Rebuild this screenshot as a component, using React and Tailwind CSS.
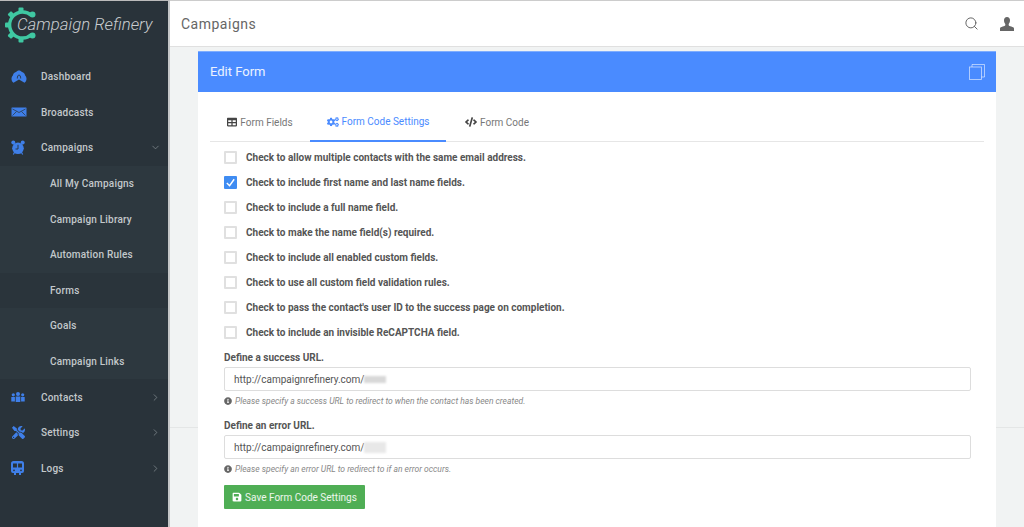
import React from 'react';
import { ChevronDown, ChevronRight, Search } from 'lucide-react';
import { FaCode, FaCogs, FaInfoCircle, FaSave, FaTable, FaTools } from 'react-icons/fa';

const BLUE = '#3f7fe8';
const DARK = '#29333a';

function DashIcon() {
  return (
    <svg viewBox="0 0 16 14" className="w-4 h-[14px]">
      <path fill={BLUE} d="M8 0.500c1.300 0 2.200.6 3 1.500 1.700.4 2.800 1.600 3 3.200.8.9 1.500 2.100 1.500 3.500 0 1.700-.8 3.400-2 4L8 9.500 2.500 12.700c-1.200-.6-2-2.300-2-4 0-1.400.7-2.600 1.500-3.500.2-1.600 1.300-2.800 3-3.200C5.800 1.100 6.700.5 8 .5z" />
      <path fill="none" stroke={DARK} strokeWidth="0.900" d="M6.300 8.500C6.300 6.500 7 5 8 5s1.700 1.500 1.700 3.500" />
    </svg>
  );
}

function MailIcon() {
  return (
    <svg viewBox="0 0 16 10" className="w-4 h-[10px]">
      <rect x="0.500" y="0.500" width="15" height="9" rx="0.500" fill={BLUE} />
      <path fill="none" stroke={DARK} strokeWidth="0.700" d="M1.500 2L8 5.500L14.500 2M1.500 8.500L5.500 4.500M14.500 8.500L10.500 4.500" />
    </svg>
  );
}

function AlarmIcon() {
  return (
    <svg viewBox="0 0 14 15" className="w-[14px] h-[15px]">
      <circle cx="7" cy="8.300" r="5.800" fill={BLUE} />
      <circle cx="2.300" cy="2.400" r="2" fill={BLUE} />
      <circle cx="11.700" cy="2.400" r="2" fill={BLUE} />
      <path stroke={BLUE} strokeWidth="1.200" d="M3.500 12.500L2.300 14.500M10.500 12.500L11.700 14.500" />
      <path fill="none" stroke={DARK} strokeWidth="0.900" d="M7 4.800V9H4.500" />
    </svg>
  );
}

function UsersIcon() {
  return (
    <svg viewBox="0 0 14 10" className="w-[14px] h-[10px]">
      <g fill={BLUE}>
        <circle cx="2.300" cy="2.800" r="1.600" />
        <circle cx="11.700" cy="2.800" r="1.600" />
        <path d="M0.300 5h3.600v4.500H0.300zM10.100 5h3.600v4.500h-3.600z" />
        <circle cx="7" cy="2" r="2" />
        <path d="M4.700 4.500h4.600v5.500H4.700z" />
      </g>
    </svg>
  );
}

function TrainIcon() {
  return (
    <svg viewBox="0 0 13 14" className="w-[13px] h-[14px]">
      <path fill={BLUE} d="M2.500 0h8A2.500 2.500 0 0 1 13 2.500V10a2 2 0 0 1-2 2H2a2 2 0 0 1-2-2V2.500A2.500 2.500 0 0 1 2.500 0zM3 12h2v2H3zM8 12h2v2H8z" />
      <path fill={DARK} d="M2 2.500h3.900v4H2zM7.100 2.500H11v4H7.100z" />
      <circle cx="3" cy="9.300" r="0.900" fill={DARK} />
      <circle cx="10" cy="9.300" r="0.900" fill={DARK} />
    </svg>
  );
}

const mainItems = [
  { label: 'Dashboard', icon: <DashIcon /> },
  { label: 'Broadcasts', icon: <MailIcon /> },
];

const subItems = ['All My Campaigns', 'Campaign Library', 'Automation Rules', 'Forms', 'Goals', 'Campaign Links'];

const lowerItems = [
  { label: 'Contacts', icon: <UsersIcon /> },
  { label: 'Settings', icon: <FaTools className="w-[15px] h-[13px] text-[#3f7fe8]" /> },
  { label: 'Logs', icon: <TrainIcon /> },
];

const checks = [
  ['Check to allow multiple contacts with the same email address.', false],
  ['Check to include first name and last name fields.', true],
  ['Check to include a full name field.', false],
  ['Check to make the name field(s) required.', false],
  ['Check to include all enabled custom fields.', false],
  ['Check to use all custom field validation rules.', false],
  ["Check to pass the contact's user ID to the success page on completion.", false],
  ['Check to include an invisible ReCAPTCHA field.', false],
];

function NavRow({ icon, label, chevron }) {
  return (
    <div className="h-[35.6px] flex items-center pl-[11px] pr-[7px] text-[10px] font-medium tracking-[0.2px] text-[#c3c8cb]">
      <span className="w-[30px] flex justify-start">{icon}</span>
      <span className="flex-1">{label}</span>
      {chevron}
    </div>
  );
}

function UrlField({ label, help, blurClass }) {
  return (
    <div>
      <div className="h-[14px] pt-[1px] text-[10px] leading-[14px] font-bold text-[#555]">{label}</div>
      <div className="mt-[3px] h-[24px] w-[747px] rounded-[2px] border border-[#ddd] bg-white flex items-center pl-[9px] text-[10px] text-[#555]">
        http://campaignrefinery.com/
        <span className={blurClass} />
      </div>
      <div className="mt-[4px] flex items-center gap-[3px] text-[8.5px] leading-[12px] italic text-[#888]">
        <FaInfoCircle className="w-[8px] h-[8px] text-[#666]" />
        {help}
      </div>
    </div>
  );
}

export default function App() {
  return (
    <div className="h-[527px] w-[1024px] flex overflow-hidden bg-[#f1f3f3] font-['Roboto',sans-serif]">
      {/* Sidebar */}
      <aside className="w-[170px] shrink-0 bg-[#29333a] border-t border-[#bbb] border-r-2 border-r-[#c4c6c7]">
        <div className="h-[58px] flex items-center pl-[4px] pb-[11px]">
          <svg viewBox="0 0 34 36" className="w-[34px] h-[36px] shrink-0">
            <g fill="#3fc8a2">
              <path fill="none" stroke="#3fc8a2" strokeWidth="3.400" d="M27.500 8.500A13 13 0 1 0 27.500 27.500" />
              <rect x="14.500" y="0.500" width="5" height="5" rx="1" />
              <rect x="14.500" y="30.500" width="5" height="5" rx="1" />
              <rect x="1" y="15.500" width="5" height="5" rx="1" />
              <rect x="4.500" y="5" width="5" height="5" rx="1" transform="rotate(45 7 7.500)" />
              <rect x="4.500" y="26" width="5" height="5" rx="1" transform="rotate(45 7 28.500)" />
              <circle cx="28.500" cy="7.500" r="3" />
              <circle cx="28.500" cy="28.500" r="3" />
            </g>
          </svg>
          <span className="-ml-[21px] text-[16.8px] italic font-light text-[#c9cdd0] whitespace-nowrap">
            Campaign Refinery
          </span>
        </div>
        {mainItems.map((item) => (
          <NavRow key={item.label} icon={item.icon} label={item.label} />
        ))}
        <NavRow
          icon={<AlarmIcon />}
          label="Campaigns"
          chevron={<ChevronDown className="w-[11px] h-[11px] text-[#8b9397]" strokeWidth={1.500} />}
        />
        <div className="bg-[#2d383f]">
          {subItems.map((label) => (
            <div
              key={label}
              className={`h-[35.6px] flex items-center pl-[50px] text-[10px] font-medium tracking-[0.2px] text-[#c3c8cb] ${label === 'Forms' ? 'bg-[#2a343b]' : ''}`}
            >
              {label}
            </div>
          ))}
        </div>
        {lowerItems.map((item) => (
          <NavRow
            key={item.label}
            icon={item.icon}
            label={item.label}
            chevron={<ChevronRight className="w-[11px] h-[11px] text-[#8b9397]" strokeWidth={1.500} />}
          />
        ))}
      </aside>

      {/* Main column */}
      <main className="flex-1 flex flex-col min-w-0">
        <header className="h-[47px] shrink-0 bg-white border-t border-[#ccc] border-b border-b-[#e0e0e0] flex items-center pl-[11px] pr-[10px]">
          <h1 className="flex-1 pt-[1px] text-[14px] tracking-[0.5px] text-[#666]">Campaigns</h1>
          <Search className="w-[15px] h-[15px] text-[#666] mr-[21px]" strokeWidth={1.600} />
          <svg viewBox="0 0 14 14" className="w-[14px] h-[14px]">
            <path fill="#666" d="M7 0c1.900 0 3 1.300 3 3.200 0 1.600-.6 3-1.300 3.700v1.300c0 .5 1.200.9 2.600 1.400 1.500.5 2.700 1 2.700 2V14H0v-2.400c0-1 1.200-1.500 2.700-2 1.400-.5 2.600-.9 2.600-1.400V6.900C4.600 6.200 4 4.800 4 3.200 4 1.300 5.100 0 7 0z" />
          </svg>
        </header>

        <div className="relative flex-1 pl-[28px] pr-[28px] pt-[4px]">
          <div className="absolute left-0 right-0 top-[380px] h-px bg-[#e4e6e6]" />
          <section className="relative bg-white h-[476px]">
            <div className="h-[41px] bg-[#4a8bff] border-t border-[#7fadff] flex items-center justify-between pl-[12px] pr-[11px]">
              <h2 className="text-[13px] text-white/90">Edit Form</h2>
              <svg viewBox="0 0 16 16" className="w-[16px] h-[16px] text-white/70" fill="none" stroke="currentColor" strokeWidth="0.800">
                <rect x="0.500" y="3" width="12" height="12.500" />
                <path d="M3 3V0.500H15.500V13H12.500" />
              </svg>
            </div>

            <div className="mx-[12px] h-[50px] flex border-b border-[#e6e6e6] text-[10px] text-[#777]">
              <div className="w-[100px] flex items-center justify-center gap-[3px] pt-[11px]">
                <FaTable className="w-[10px] h-[10px] text-[#444]" /> Form Fields
              </div>
              <div className="w-[136px] flex items-center justify-center gap-[3px] pt-[11px] text-[#4a8bff] border-b-2 border-[#4a8bff] -mb-px">
                <FaCogs className="w-[12px] h-[12px]" /> Form Code Settings
              </div>
              <div className="w-[102px] flex items-center justify-center gap-[3px] pt-[11px]">
                <FaCode className="w-[12px] h-[12px] text-[#444]" /> Form Code
              </div>
            </div>

            <div className="pl-[26px] pt-[3px]">
              {checks.map(([label, checked]) => (
                <div key={label} className="h-[25px] flex items-center">
                  <span className={`w-[13px] h-[13px] rounded-[1px] border-2 flex items-center justify-center ${checked ? 'bg-[#3f8cf2] border-[#3f8cf2]' : 'bg-white border-[#e0e0e0]'}`}>
                    {checked && (
                      <svg viewBox="0 0 12 12" className="w-[11px] h-[11px] shrink-0">
                        <path d="M2 6.500L5 9.500L10 2.500" fill="none" stroke="white" strokeWidth="1.600" />
                      </svg>
                    )}
                  </span>
                  <span className="ml-[9px] text-[10px] font-bold text-[#555]">{label}</span>
                </div>
              ))}

              <div className="mt-[5px] flex flex-col gap-[11px]">
                <UrlField
                  label="Define a success URL."
                  help="Please specify a success URL to redirect to when the contact has been created."
                  blurClass="w-[22px] h-[7px] bg-[#d8d8d8] blur-[1px]"
                />
                <UrlField
                  label="Define an error URL."
                  help="Please specify an error URL to redirect to if an error occurs."
                  blurClass="w-[22px] h-[11px] bg-[#e8e8e8] blur-[1px]"
                />
              </div>

              <button className="mt-[10px] h-[24px] w-[141px] rounded-[1px] bg-[#4fae55] flex items-center justify-center gap-[3px] text-[10px] text-white/90">
                <FaSave className="w-[10px] h-[10px] text-white" /> Save Form Code Settings
              </button>
            </div>
          </section>
        </div>
      </main>
    </div>
  );
}
